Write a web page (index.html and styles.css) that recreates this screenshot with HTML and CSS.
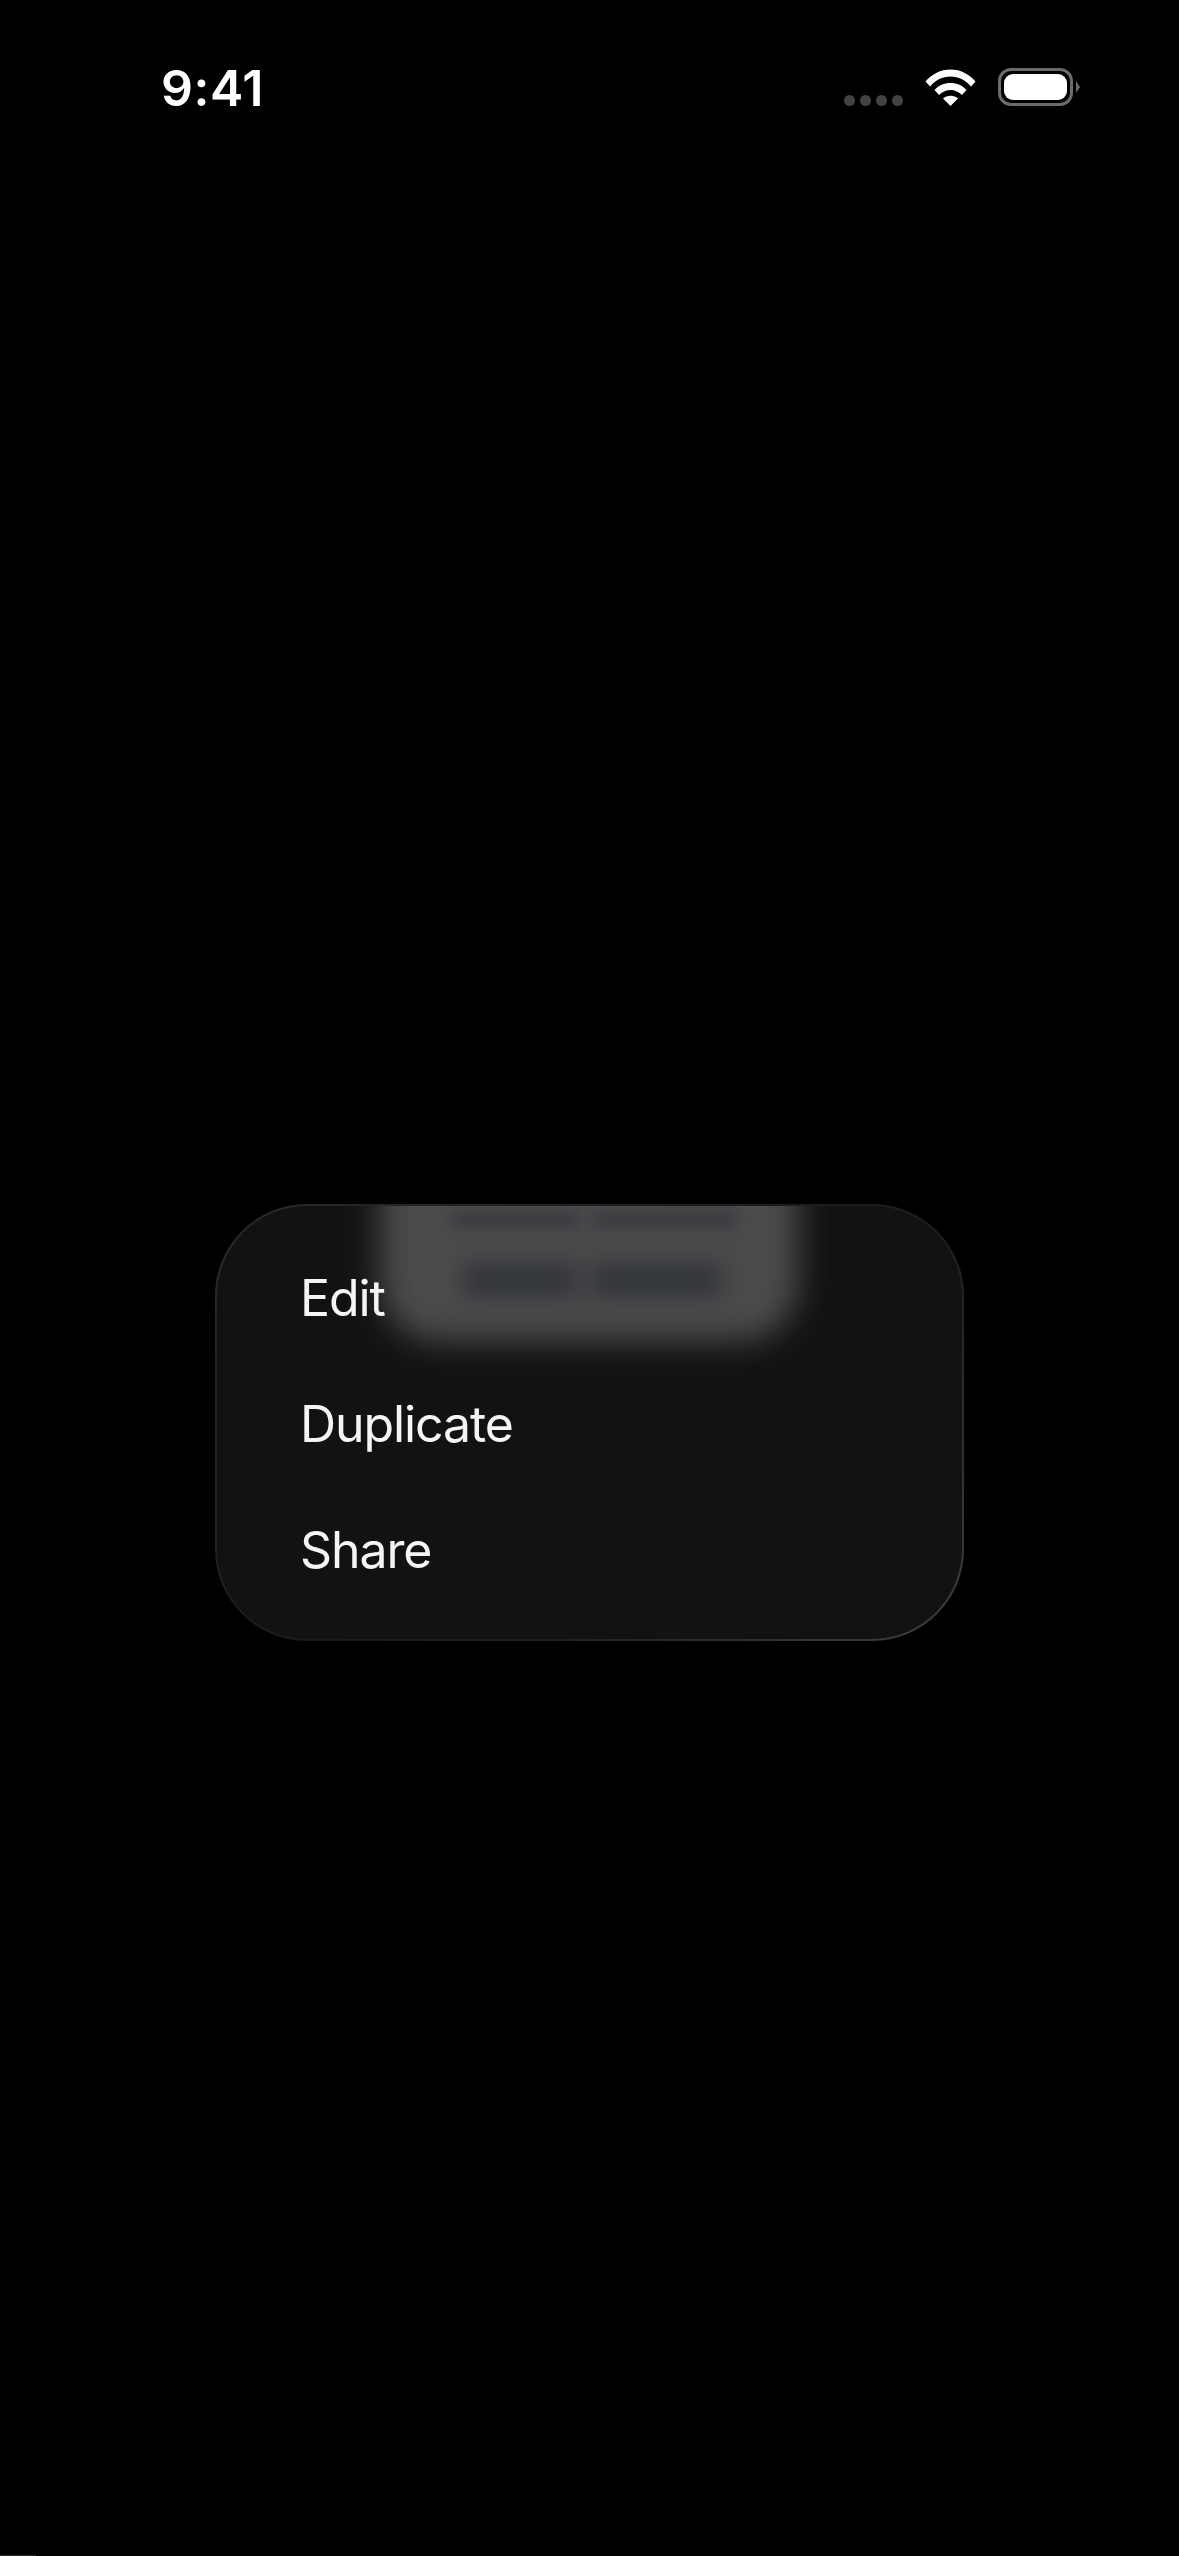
FILE: index.html
```html
<!DOCTYPE html>
<html lang="en">
<head>
<meta charset="utf-8">
<title>Context menu</title>
<link rel="stylesheet" href="styles.css">
</head>
<body>
<div class="page">
  <header class="status">
    <span class="time">9:41</span>
    <div class="indicators">
      <div class="dots"><i></i><i></i><i></i><i></i></div>
      <svg class="wifi" viewBox="0 0 51 37" aria-hidden="true">
        <path d="M0.5 12.5C7 5 15.5 0.5 25.5 0.5S44 5 50.5 12.5L46 17.5C40.5 11 33.5 7.5 25.5 7.5S10.500 11 5 17.500Z"/>
        <path d="M9.500 21C13.500 16.500 19 14 25.500 14S37.500 16.500 41.500 21L37 26C34 23 30 21 25.500 21S17 23 14 26Z"/>
        <path d="M18 29.500C20 27.800 22.500 26.800 25.500 26.800S31 27.800 33 29.500L25.500 37Z"/>
      </svg>
      <div class="battery"><div class="battery-level"></div></div>
      <div class="battery-cap"></div>
    </div>
  </header>
  <section class="menu">
    <div class="backdrop">
      <div class="backdrop-panel"></div>
      <div class="backdrop-word top-a"></div>
      <div class="backdrop-word top-b"></div>
      <div class="backdrop-word mid-a"></div>
      <div class="backdrop-word mid-b"></div>
    </div>
    <div class="menu-item">Edit</div>
    <div class="menu-item">Duplicate</div>
    <div class="menu-item">Share</div>
  </section>
  <div class="edge-mark"></div>
</div>
</body>
</html>
```
FILE: styles.css
```css
* { box-sizing: border-box; }
html, body { margin: 0; padding: 0; background: #000; }
.page {
  width: 1179px;
  height: 2556px;
  display: flex;
  flex-direction: column;
  overflow: hidden;
  background: #000;
  font-family: Inter, "Liberation Sans", sans-serif;
}
.status {
  height: 128px;
  padding: 60px 99px 0 161px;
  display: flex;
  justify-content: space-between;
  align-items: flex-start;
}
.time {
  color: #fff;
  font-size: 50px;
  line-height: 56px;
  font-weight: 600;
  letter-spacing: 0.5px;
}
.indicators {
  display: flex;
  align-items: flex-start;
  padding-top: 8px;
}
.dots {
  display: flex;
  gap: 5px;
  margin-top: 27px;
  margin-right: 22px;
}
.dots i {
  display: block;
  width: 11px;
  height: 11px;
  border-radius: 50%;
  background: #434343;
}
.wifi {
  width: 51px;
  height: 37px;
  margin-top: 1px;
  margin-right: 22px;
  fill: #fff;
}
.battery {
  width: 75px;
  height: 38px;
  padding: 3px;
  border: 3px solid #6b6b6b;
  border-radius: 13px;
}
.battery-level {
  width: 100%;
  height: 100%;
  background: #fff;
  border-radius: 9px;
}
.battery-cap {
  width: 4px;
  height: 12px;
  margin: 13px 0 0 3px;
  background: #6b6b6b;
  clip-path: polygon(0 0, 100% 50%, 0 100%);
}
.menu {
  position: relative;
  width: 749px;
  height: 437px;
  margin: 1076px 0 0 215px;
  padding: 29px 0 0 83px;
  overflow: hidden;
  border-radius: 92px;
  border: 2px solid transparent;
  background:
    linear-gradient(#121213, #121213) padding-box,
    linear-gradient(135deg, #2a2a2a 0%, #1b1b1b 45%, #1f1f1f 65%, #404040 100%) border-box;
}
.backdrop {
  position: absolute;
  inset: 0;
  overflow: hidden;
  border-radius: 90px;
}
.backdrop-panel {
  position: absolute;
  left: 162px;
  top: -50px;
  width: 420px;
  height: 186px;
  border-radius: 0 0 60px 60px;
  background: #4b4b4d;
  filter: blur(16px);
}
.backdrop-word {
  position: absolute;
  background: #333638;
}
.backdrop-word.top-a {
  left: 236px;
  top: 7px;
  width: 125px;
  height: 13px;
  filter: blur(8px);
}
.backdrop-word.top-b {
  left: 375px;
  top: 7px;
  width: 145px;
  height: 13px;
  filter: blur(8px);
}
.backdrop-word.mid-a {
  left: 246px;
  top: 57px;
  width: 115px;
  height: 34px;
  filter: blur(11px);
}
.backdrop-word.mid-b {
  left: 373px;
  top: 57px;
  width: 133px;
  height: 34px;
  filter: blur(11px);
}
.menu-item {
  position: relative;
  height: 126px;
  line-height: 126px;
  color: #f5f5f5;
  font-size: 50px;
  font-weight: 400;
  letter-spacing: -1.1px;
}
.edge-mark {
  width: 36px;
  height: 1px;
  margin-top: auto;
  background: #2a2a2a;
}
```
